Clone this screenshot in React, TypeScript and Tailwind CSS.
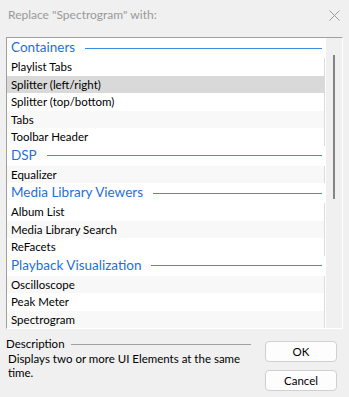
const groups = [
  { name: "Containers", items: ["Playlist Tabs", "Splitter (left/right)", "Splitter (top/bottom)", "Tabs", "Toolbar Header"] },
  { name: "DSP", items: ["Equalizer"] },
  { name: "Media Library Viewers", items: ["Album List", "Media Library Search", "ReFacets"] },
  { name: "Playback Visualization", items: ["Oscilloscope", "Peak Meter", "Spectrogram"] },
];

const selected = "Splitter (left/right)";

export default function App() {
  let idx = 0;
  return (
    <div className="w-[349px] h-[397px] bg-[#f0f0f0] flex flex-col text-[11.5px] text-black overflow-hidden" style={{ fontFamily: "Lato, 'Noto Sans', sans-serif" }}>
      {/* Title bar */}
      <div className="h-[30px] flex items-center justify-between pl-[8px] pr-[9px]">
        <span className="text-[#999999] text-[12px]">Replace "Spectrogram" with:</span>
        <svg width="11" height="11" viewBox="0 0 11 11" className="text-[#9a9a9a]">
          <path d="M0.5 0.5 L10.5 10.5 M10.5 0.5 L0.5 10.5" stroke="currentColor" strokeWidth="1" />
        </svg>
      </div>

      {/* List box */}
      <div className="mx-[6px] mt-[7px] h-[292px] border-t border-l border-[#a0a0a0] border-r-white border-b-white border-r border-b flex bg-white">
        <div className="flex-1 flex flex-col overflow-hidden pr-[1px]">
          {groups.map((g) => (
            <div key={g.name} className="flex flex-col">
              <div className="h-[20px] shrink-0 flex items-center pl-[4px] pr-[3px] gap-[10px]">
                <span className="text-[13.5px] text-[#1f6fd8] leading-none">{g.name}</span>
                <div className="flex-1 h-px bg-[#3c8ee3]" />
              </div>
              {g.items.map((it) => {
                const i = idx++;
                const sel = it === selected;
                return (
                  <div
                    key={it}
                    className={
                      "h-[17.5px] shrink-0 flex items-center pl-[4px] border-r " +
                      (sel ? "bg-[#d9d9d9] border-[#d9d9d9]" : i % 2 === 1 ? "bg-[#f8f8f8] border-[#dcdcdc]" : "bg-white border-[#dcdcdc]")
                    }
                  >
                    {it}
                  </div>
                );
              })}
            </div>
          ))}
        </div>
        <div className="w-[16px] shrink-0 bg-[#f0f0f0] flex justify-center pt-[17px]">
          <div className="w-[2px] h-[144px] bg-[#858585] ml-[-1px]" />
        </div>
      </div>

      {/* Bottom */}
      <div className="flex pl-[6px] pr-[12px] mt-[8px]">
        <div className="flex-1 flex flex-col pr-[14px]">
          <div className="flex items-center gap-[6px] h-[14px]">
            <span>Description</span>
            <div className="flex-1 h-px bg-[#a0a0a0]" />
          </div>
          <p className="pl-[2px] leading-[14px] mt-[1px]">Displays two or more UI Elements at the same time.</p>
        </div>
        <div className="w-[72px] flex flex-col gap-[8px] pt-[4px]">
          <button className="h-[21px] rounded-[4px] border border-[#d0d0d0] bg-[#fdfdfd] text-[11.5px]">OK</button>
          <button className="h-[21px] rounded-[4px] border border-[#d0d0d0] bg-[#fdfdfd] text-[11.5px]">Cancel</button>
        </div>
      </div>
    </div>
  );
}
